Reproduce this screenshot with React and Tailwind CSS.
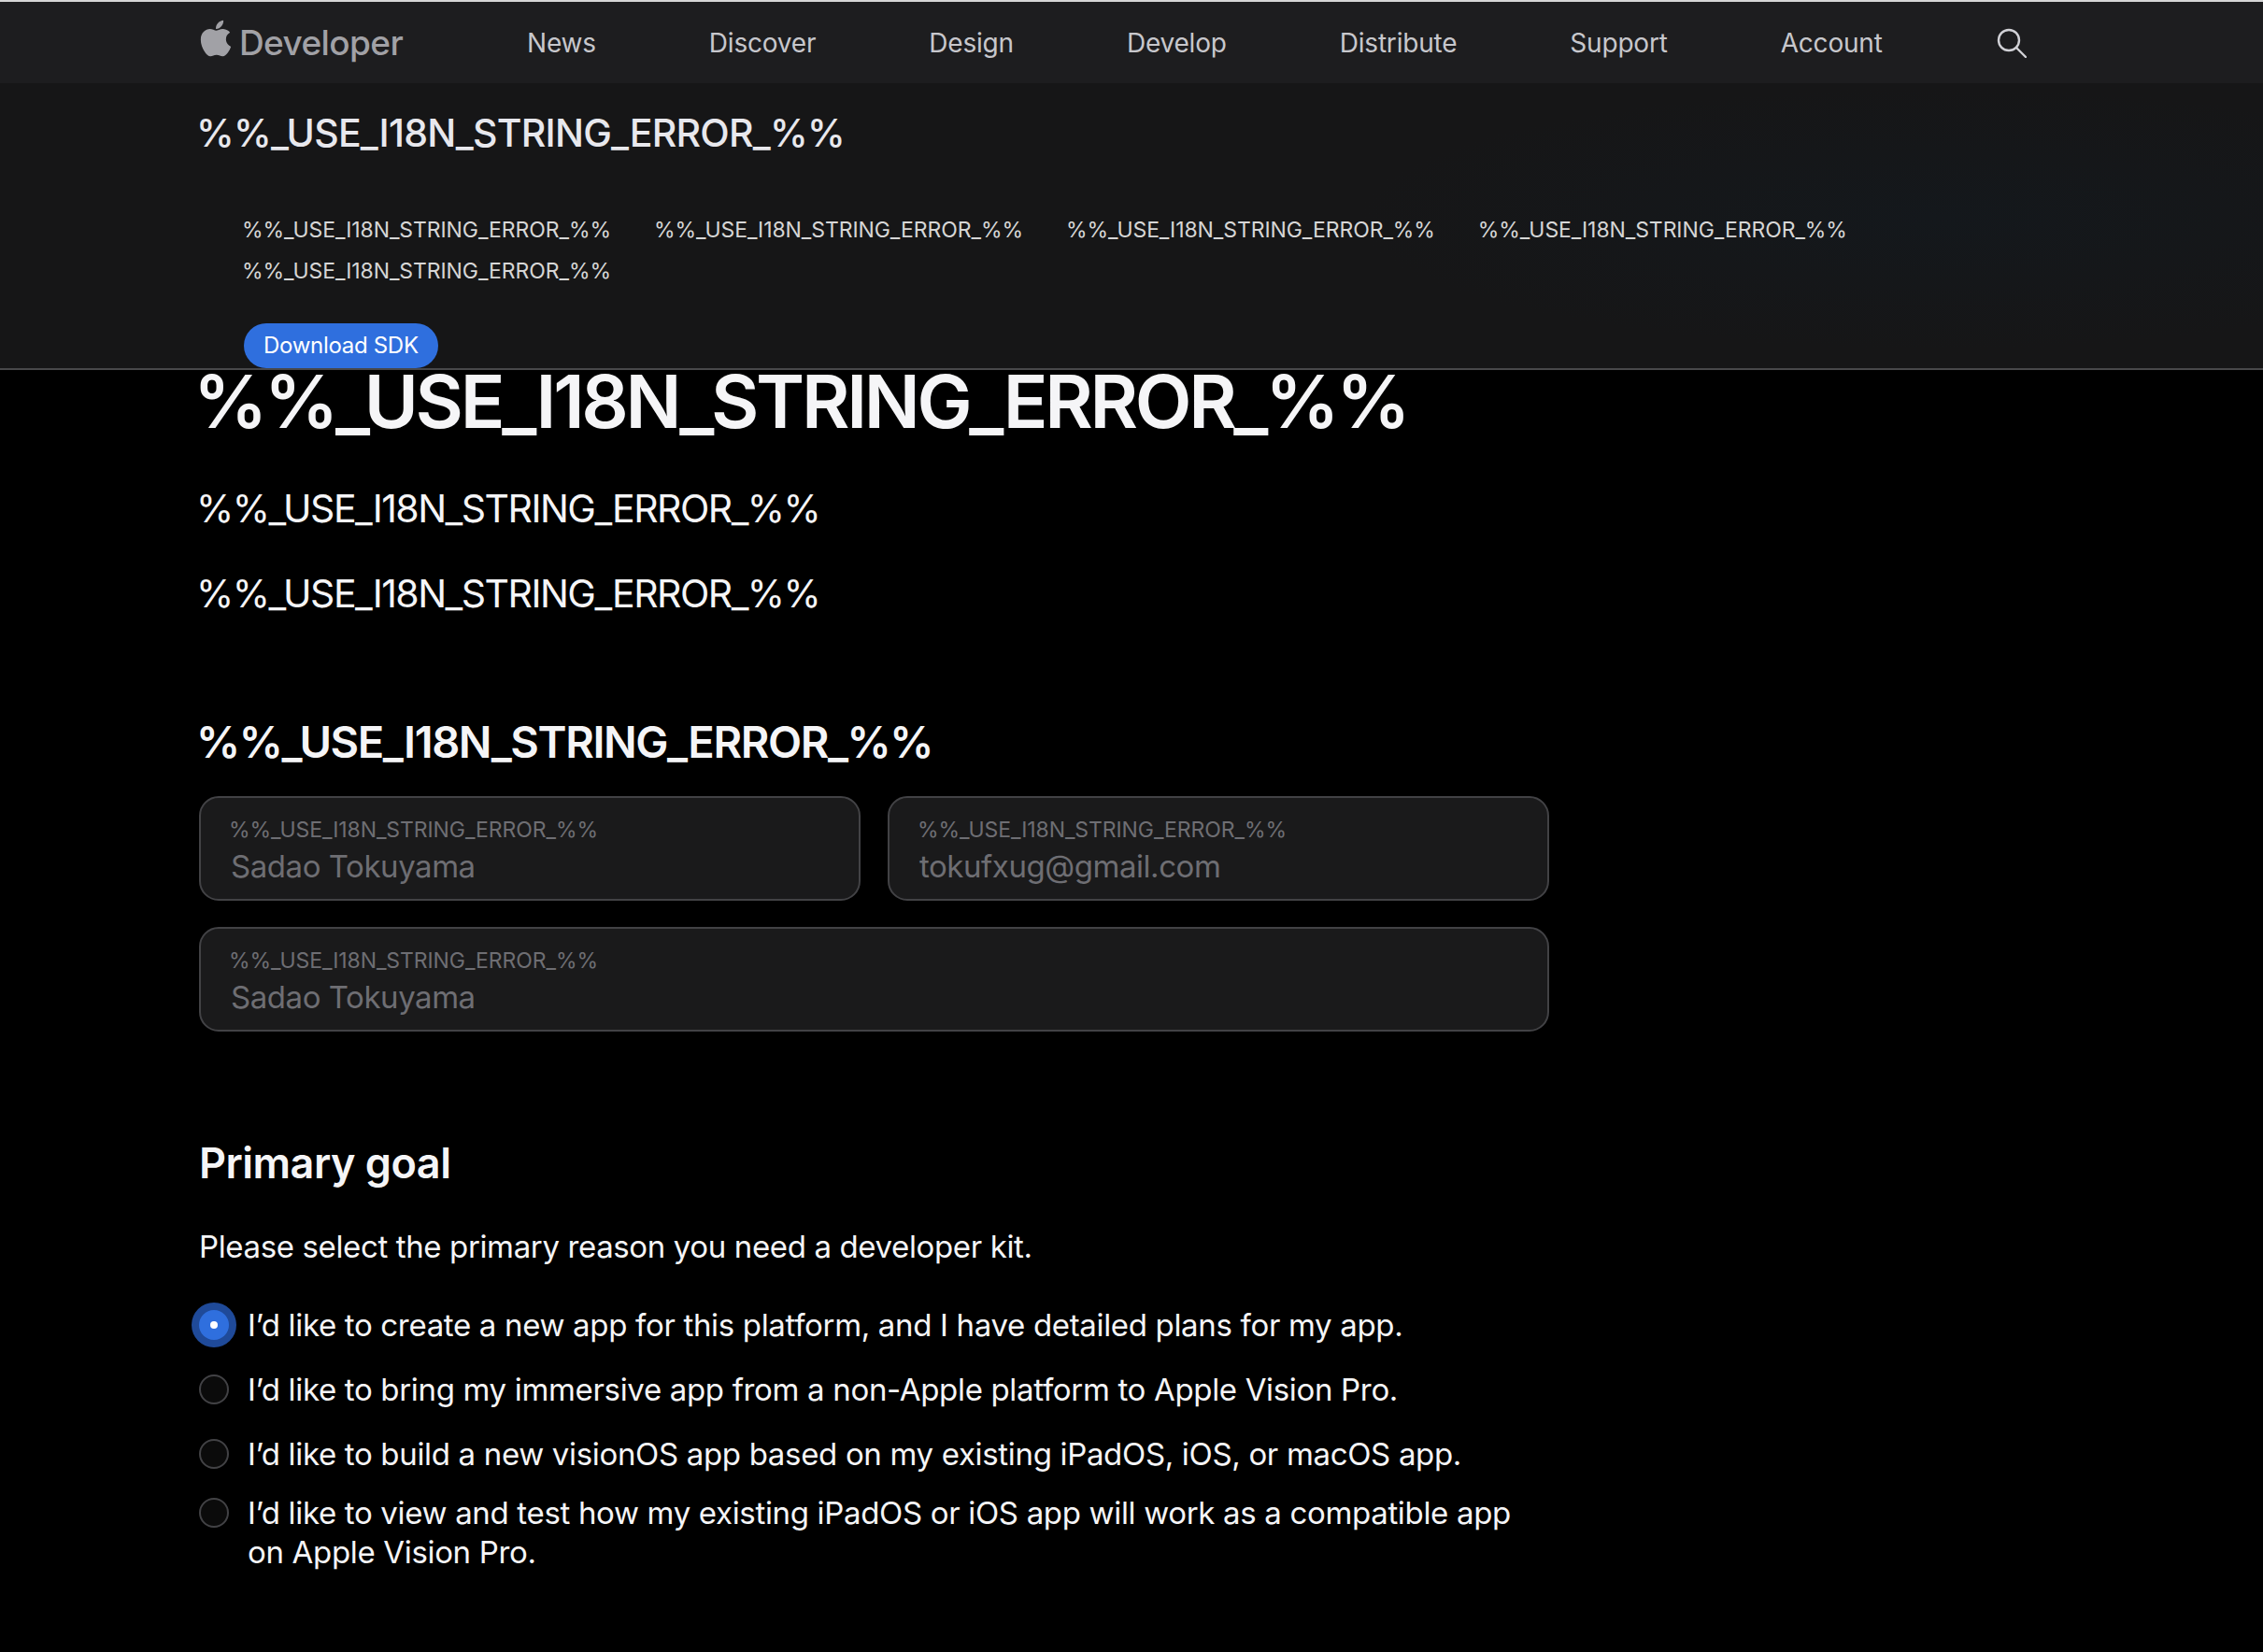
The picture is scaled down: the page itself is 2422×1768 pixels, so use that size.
import React from "react";
import { FaApple } from "react-icons/fa";

const navItems = ["News", "Discover", "Design", "Develop", "Distribute", "Support", "Account"];
const ERR = "%%_USE_I18N_STRING_ERROR_%%";

const goals = [
  "I’d like to create a new app for this platform, and I have detailed plans for my app.",
  "I’d like to bring my immersive app from a non-Apple platform to Apple Vision Pro.",
  "I’d like to build a new visionOS app based on my existing iPadOS, iOS, or macOS app.",
  "I’d like to view and test how my existing iPadOS or iOS app will work as a compatible app on Apple Vision Pro.",
];

const Field = ({ value, className }) => (
  <div className={`h-[112px] rounded-[21px] border-2 border-[#424245] bg-[#1a1a1b] pl-[32px] pt-[18px] ${className || ""}`}>
    <div className="ml-[-2px] text-[23px] leading-[32px] tracking-[-0.08px] text-[#6e6e73]">{ERR}</div>
    <div className="mt-[2px] text-[33px] leading-[42px] tracking-[-0.45px] text-[#6e6e73]">{value}</div>
  </div>
);

const Radio = ({ checked }) =>
  checked ? (
    <div className="flex h-[48px] w-[48px] shrink-0 items-center justify-center rounded-full bg-[#1f4a99]">
      <div className="flex h-[32px] w-[32px] items-center justify-center rounded-full bg-[#2f6fde]">
        <div className="h-[8px] w-[8px] rounded-full bg-white" />
      </div>
    </div>
  ) : (
    <div className="mx-[8px] h-[32px] w-[32px] shrink-0 rounded-full border-2 border-[#424245] bg-[#0b0b0b]" />
  );

export default function App() {
  return (
    <div className="min-h-[1768px] overflow-hidden bg-black font-['Inter',sans-serif] text-white">
      <div className="h-[2px] bg-[#d6d6d6]" />
      <nav className="flex h-[87px] items-center bg-[#1d1d1f] pl-[213px]">
        <div className="flex w-[351px] items-center text-[#a1a1a6]">
          <FaApple className="mt-[-10px] ml-[-4px] h-[44px] w-[44px]" />
          <span className="ml-[3px] text-[37px] font-medium tracking-[-0.6px]">Developer</span>
        </div>
        <div className="flex items-center gap-[121px] text-[28px] tracking-[-0.2px] text-[#c7c7cc]">
          {navItems.map((item) => (
            <span key={item}>{item}</span>
          ))}
        </div>
        <svg className="ml-[122px] text-[#d1d1d6]" width="32" height="32" viewBox="0 0 32 32" fill="none" stroke="currentColor" strokeWidth="2.4">
          <circle cx="13" cy="13" r="11" />
          <path d="M21 21l10 10" strokeLinecap="round" />
        </svg>
      </nav>
      <section className="h-[307px] border-b-2 border-[#48484a] bg-[#161617] bg-[radial-gradient(ellipse_620px_140px_at_2073px_145px,#14181c,transparent)] pl-[213px]">
        <div className="ml-[-3px] pt-[28px] text-[41px] font-medium leading-[50px] tracking-[-0.75px] text-[#e8e8ed]">{ERR}</div>
        <div className="ml-[-2px] mt-[57px] flex w-[1800px] flex-wrap gap-x-[46px] gap-y-[0px] pl-[48px]">
          {[0, 1, 2, 3, 4].map((i) => (
            <span key={i} className="text-[23px] leading-[44px] tracking-[-0.08px] text-[#d6d6d6]">
              {ERR}
            </span>
          ))}
        </div>
        <button className="ml-[48px] mt-[34px] h-[48px] rounded-full bg-[#2f6fde] px-[21px] text-[24px] tracking-[-0.3px] text-white">
          Download SDK
        </button>
      </section>
      <main className="pl-[213px]">
        <h1 className="ml-[-6px] mt-[-3px] text-[79px] font-semibold leading-[72px] tracking-[-3.3px] text-[#f5f5f7]">{ERR}</h1>
        <p className="ml-[-3px] mt-[53px] text-[41px] leading-[52px] tracking-[-1.5px] text-[#f5f5f7]">{ERR}</p>
        <p className="ml-[-3px] mt-[39px] text-[41px] leading-[52px] tracking-[-1.5px] text-[#f5f5f7]">{ERR}</p>
        <h2 className="ml-[-3px] mt-[105px] text-[47px] font-semibold leading-[56px] tracking-[-1.4px] text-[#f5f5f7]">{ERR}</h2>
        <div className="mt-[30px] grid w-[1445px] grid-cols-2 gap-x-[29px] gap-y-[28px]">
          <Field value="Sadao Tokuyama" />
          <Field value="tokufxug@gmail.com" />
          <Field value="Sadao Tokuyama" className="col-span-2" />
        </div>
        <h3 className="mt-[113px] text-[45px] font-semibold leading-[56px] tracking-[-0.5px] text-[#f5f5f7]">Primary goal</h3>
        <p className="mt-[39px] text-[33px] leading-[44px] tracking-[-0.37px] text-[#f5f5f7]">Please select the primary reason you need a developer kit.</p>
        <div className="mt-[38px] ml-[-8px] flex w-[1453px] flex-col">
          {goals.map((goal, i) => (
            <div key={i} className={`flex items-start gap-[12px] ${i === 0 ? "" : i === 3 ? "mt-[15px]" : "mt-[21px]"}`}>
              <div className="flex h-[48px] items-center">
                <Radio checked={i === 0} />
              </div>
              <span className="pt-[3px] text-[33px] leading-[42px] tracking-[-0.33px] text-[#f5f5f7]">{goal}</span>
            </div>
          ))}
        </div>
      </main>
    </div>
  );
}
